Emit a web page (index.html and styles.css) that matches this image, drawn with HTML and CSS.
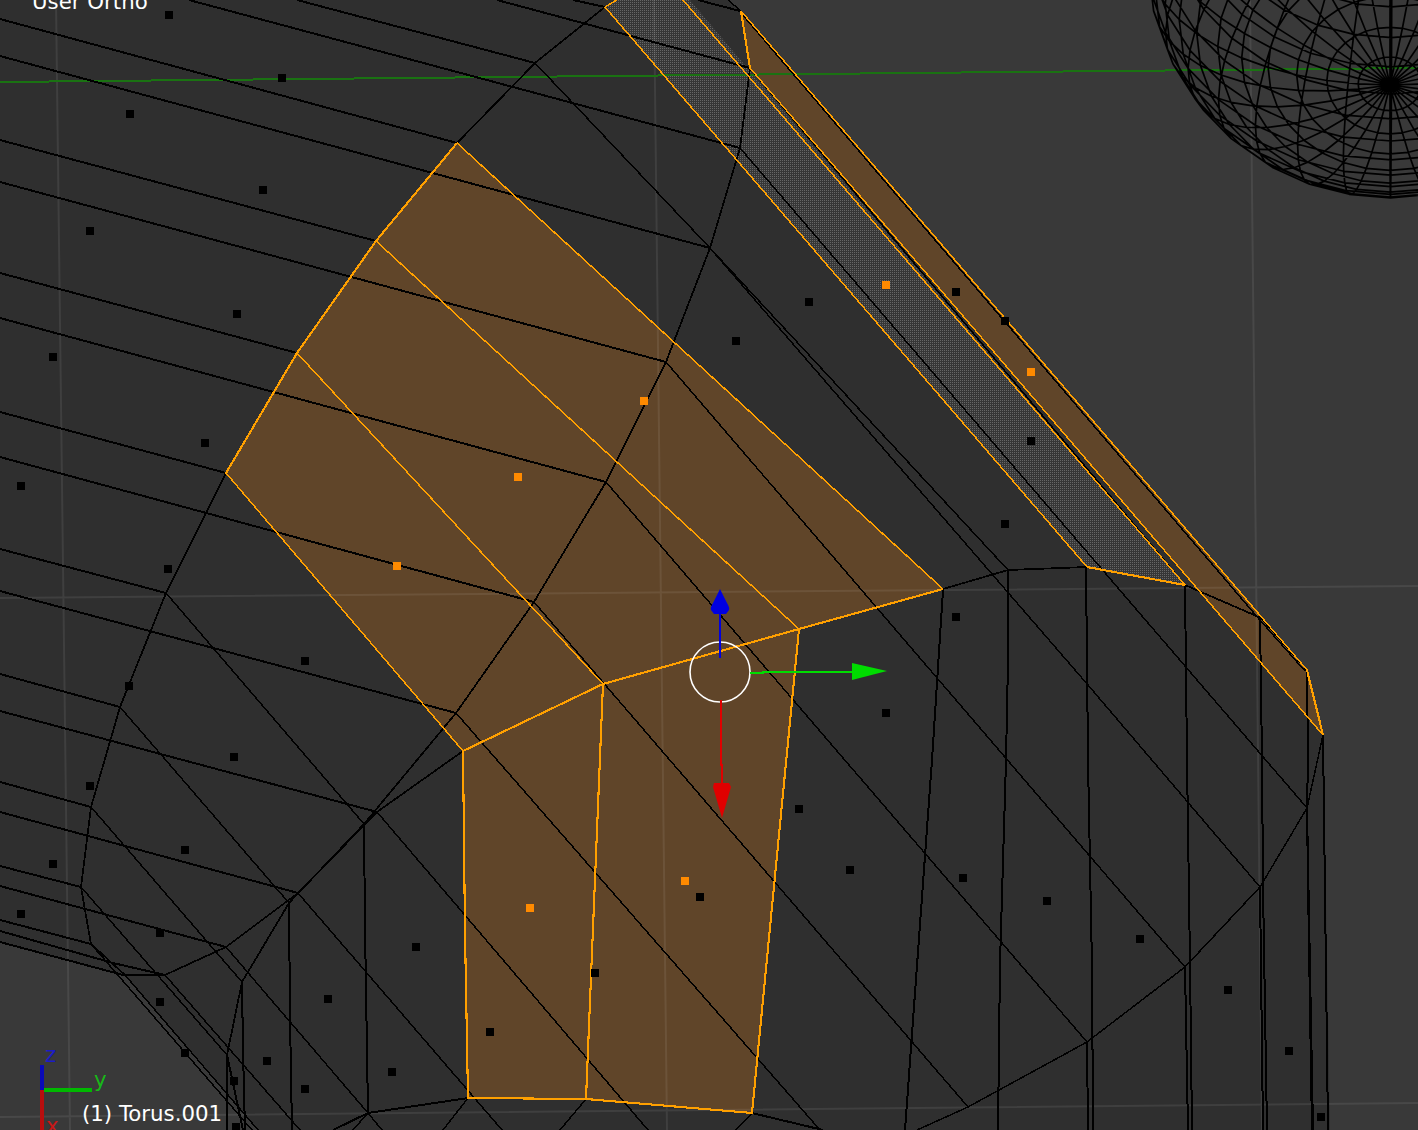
FILE: index.html
```html
<!DOCTYPE html>
<html lang="en">
<head>
<meta charset="utf-8">
<title>User Ortho viewport</title>
<link rel="stylesheet" href="styles.css">
</head>
<body>
<main class="viewport">
<svg class="scene" width="1418" height="1130" viewBox="0 0 1418 1130" xmlns="http://www.w3.org/2000/svg">
  <defs>
    <pattern id="stipple" width="2" height="2" patternUnits="userSpaceOnUse">
      <rect class="stipple-base" width="2" height="2"/>
      <rect class="stipple-dot" width="1" height="1"/>
    </pattern>
  </defs>

  <rect class="backdrop" width="1418" height="1130"/>
  <path class="mesh-body" d="M0 0H728L741 11L1307 670L1323 735L1330 1130H258L125 975L0 942Z"/>

  <path class="face" d="M457 143L943 589L799 629L752 1113L586 1099L468 1098L463 751L226 473L297 353L376 241Z"/>
  <path class="face" d="M741 11L1307 670L1323 735L750 68Z"/>
  <path class="hatch" d="M605 7L630 -8H683L1185 585L1087 567Z"/>

  <path class="grid" d="M0 598L1418 586M0 1117L1418 1103M56 0L70 1130M654 0L667 1130M1250 0L1262 1130"/>
  <path class="axis-line" d="M0 82L1418 68"/>

  <g id="sphere" class="sphere"></g>

  <path class="wire wire-heavy" d="M189 0L740 148M297 0L535 63M497 0L750 68M573 0L605 7M698 0L740 11M0 19L457 143M0 56L710 248M0 140L376 241M0 182L666 362M0 273L297 353M0 318L606 482M0 412L226 473M0 457L534 602M0 549L166 593M0 591L456 713M0 674L120 707M0 711L377 812M0 782L91 807M0 812L298 893M0 866L81 887M0 886L226 947M0 920L91 944M0 931L113 963L165 975M0 942L123 975L165 975"/>
  <path class="wire" d="M605 7L535 63L457 143M226 473L166 593L120 707L91 807L81 887L85 910L91 944L125 975L165 975L226 947L298 893L377 812L463 751M750 68L740 148L710 248L666 362L606 482L534 602L456 713L364 824L289 903L242 982L227 1055L227 1130M943 589L1008 570L1087 567M1185 585L1261 618L1307 670"/>
  <path class="wire wire-thin" d="M728 0L741 11M750 68L1185 585M741 13L1259 619L1305 671M535 63L710 248L825 381L1088 685L1260 887M710 248L1008 570M740 148L1307 808M666 362L1185 967M606 482L1087 1042M534 602L968 1107M456 713L820 1130M377 812L648 1130M298 893L502 1130M226 947L368 1113L382 1130M165 975L300 1130M91 944L252 1130M125 975L258 1130M81 887L227 1055M91 807L242 982M120 707L289 903M166 593L364 824M1323 735L1307 808L1260 887L1185 967L1087 1042L968 1107L917 1130M752 1113L736 1130M586 1099L560 1130M468 1098L443 1130M368 1113L353 1130"/>
  <path class="wire wire-heavy" d="M943 590L932 760L905 1130M1008 570L1008 660L1006 760L1000 963L998 1130M1086 567L1088 760L1092 967L1093 1130M1087 1042L1088 1130M1185 585L1187 760L1190 963L1192 1130M1185 967L1188 1130M1260 618L1262 760L1263 887L1267 1130M1260 887L1263 1130M1307 670L1308 760L1307 807L1308 883L1312 1130M1307 808L1313 1130M1323 735L1328 1130M752 1113L823 1130M468 1098L368 1113L333 1130M289 903L290 1017L292 1130M364 824L365 927L368 1113M242 982L243 1050L245 1130M227 1055L243 1130"/>

  <path class="edge" d="M457 143L943 589M376 241L799 629M297 353L603 684M226 473L463 751M605 7L1087 567M605 7L630 -8M683 0L1185 585M750 68L1323 735M741 11L1307 670"/>
  <path class="edge edge-bold" d="M457 143L376 241L297 353L226 473M463 751L603 684L799 629L943 589M1087 567L1185 585M741 11L750 68M1307 670L1323 735M463 751L465 933L468 1098L586 1099L752 1113L799 629M603 684L586 1099"/>

  <path class="verts" d="M165 11h8v8h-8zM278 74h8v8h-8zM126 110h8v8h-8zM259 186h8v8h-8zM86 227h8v8h-8zM233 310h8v8h-8zM49 353h8v8h-8zM201 439h8v8h-8zM17 482h8v8h-8zM164 565h8v8h-8zM301 657h8v8h-8zM125 682h8v8h-8zM230 753h8v8h-8zM86 782h8v8h-8zM181 846h8v8h-8zM49 860h8v8h-8zM17 910h8v8h-8zM156 929h8v8h-8zM156 998h8v8h-8zM181 1049h8v8h-8zM263 1057h8v8h-8zM230 1077h8v8h-8zM301 1085h8v8h-8zM232 1123h8v8h-8zM324 995h8v8h-8zM412 943h8v8h-8zM388 1068h8v8h-8zM486 1028h8v8h-8zM591 969h8v8h-8zM696 893h8v8h-8zM795 805h8v8h-8zM846 866h8v8h-8zM882 709h8v8h-8zM952 613h8v8h-8zM1001 520h8v8h-8zM1027 437h8v8h-8zM959 874h8v8h-8zM1043 897h8v8h-8zM1136 935h8v8h-8zM1224 986h8v8h-8zM1285 1047h8v8h-8zM1317 1113h8v8h-8zM805 298h8v8h-8zM732 337h8v8h-8zM952 288h8v8h-8zM1001 317h8v8h-8z"/>
  <path class="verts verts-selected" d="M882 281h8v8h-8zM1027 368h8v8h-8zM640 397h8v8h-8zM514 473h8v8h-8zM393 562h8v8h-8zM526 904h8v8h-8zM681 877h8v8h-8z"/>

  <g class="manipulator">
    <circle class="manip-ring" cx="720" cy="672" r="30"/>
    <path class="manip-stem manip-stem-z" d="M720 658V612"/>
    <path class="manip-head-z" d="M720 589L727 603Q730 608 729 610L726 614H714L711 610Q710 608 713 603Z"/>
    <path class="manip-stem manip-stem-y" d="M750 673H763L763 672H855"/>
    <path class="manip-head-y" d="M852 663L887 671L852 680Z"/>
    <path class="manip-stem manip-stem-x" d="M721 700V765H722V785"/>
    <path class="manip-head-x" d="M714 783H729L731 787L722 818L713 787Z"/>
  </g>

  <g class="corner-axes">
    <path class="axis-z" d="M42 1065V1090"/>
    <path class="axis-x" d="M42 1090V1130"/>
    <path class="axis-y" d="M44 1090H92"/>
    <text class="label label-z" x="45" y="1062">z</text>
    <text class="label label-y" x="94" y="1087">y</text>
    <text class="label label-x" x="46" y="1133">x</text>
  </g>

  <text class="label label-view" x="32" y="9">User Ortho</text>
  <text class="label label-object" x="82" y="1121">(1) Torus.001</text>
</svg>
</main>
<script src="script.js"></script>
</body>
</html>
```

FILE: styles.css
```css
html, body {
  margin: 0;
  padding: 0;
  background: #393939;
}

.viewport {
  width: 1418px;
  height: 1130px;
  overflow: hidden;
}

.scene {
  display: block;
}

.backdrop { fill: #393939; }
.mesh-body { fill: #2f2f2f; }
.face { fill: #604529; }
.hatch { fill: url(#stipple); }
.stipple-base { fill: #363636; }
.stipple-dot { fill: #666666; }

.grid {
  fill: none;
  stroke: rgba(255, 255, 255, 0.08);
  stroke-width: 2;
}

.axis-line {
  fill: none;
  stroke: #1a7212;
  stroke-width: 2;
  shape-rendering: crispEdges;
}

.sphere path {
  fill: none;
  stroke: #000;
  stroke-width: 1.7;
  stroke-linejoin: round;
}

.wire,
.edge {
  fill: none;
  stroke-width: 1.75;
  stroke-linejoin: round;
  shape-rendering: crispEdges;
}

.wire { stroke: #000; }
.wire-heavy { stroke-width: 2; }
.wire-thin { stroke-width: 1.5; }

.edge { stroke: #ffa000; stroke-width: 1.5; }
.edge-bold { stroke-width: 2.1; }

.verts { fill: #000; shape-rendering: crispEdges; }
.verts-selected { fill: #ff8a00; }

.manip-ring {
  fill: none;
  stroke: #fff;
  stroke-width: 1.6;
}

.manip-stem { fill: none; stroke-width: 2; shape-rendering: crispEdges; }
.manip-stem-z { stroke: #0000e0; }
.manip-stem-y { stroke: #00dc00; }
.manip-stem-x { stroke: #e00000; }
.manip-head-z { fill: #0000e0; }
.manip-head-y { fill: #00dc00; }
.manip-head-x { fill: #e00000; }

.axis-z, .axis-x, .axis-y {
  fill: none;
  stroke-width: 4;
  shape-rendering: crispEdges;
}
.axis-z { stroke: #0a0ab8; }
.axis-x { stroke: #b80e0e; }
.axis-y { stroke: #00b800; }

.label {
  font-family: "DejaVu Sans", sans-serif;
  font-size: 21.3px;
}
.label-view, .label-object { fill: #fff; }
.label-z { fill: #1c1cc8; }
.label-y { fill: #18b818; }
.label-x { fill: #c81818; }
```

FILE: script.js
```js
// Wireframe UV sphere: 24 stacks, 32 segments, projected orthographically.
(function () {
  var cx = 1391, cy = -46, R = 244, stacks = 24, segs = 32;
  var ax = -1 / R, ay = 131 / R, az = Math.sqrt(1 - ax * ax - ay * ay);
  var ux = 1, uy = 0, uz = 0;
  var vx = ay * uz - az * uy, vy = az * ux - ax * uz, vz = ax * uy - ay * ux;

  function point(i, j) {
    var phi = Math.PI * i / stacks, lam = 2 * Math.PI * j / segs;
    var c = Math.cos(phi), s = Math.sin(phi), cl = Math.cos(lam), sl = Math.sin(lam);
    return (cx + R * (c * ax + s * (cl * ux + sl * vx))).toFixed(1) + ' ' +
           (cy + R * (c * ay + s * (cl * uy + sl * vy))).toFixed(1);
  }

  var d = '', i, j;
  for (i = 1; i < stacks; i++) {
    d += 'M' + point(i, 0);
    for (j = 1; j <= segs; j++) d += 'L' + point(i, j);
  }
  for (j = 0; j < segs; j++) {
    d += 'M' + point(0, j);
    for (i = 1; i <= stacks; i++) d += 'L' + point(i, j);
  }

  var path = document.createElementNS('http://www.w3.org/2000/svg', 'path');
  path.setAttribute('d', d);
  document.getElementById('sphere').appendChild(path);
})();
```
